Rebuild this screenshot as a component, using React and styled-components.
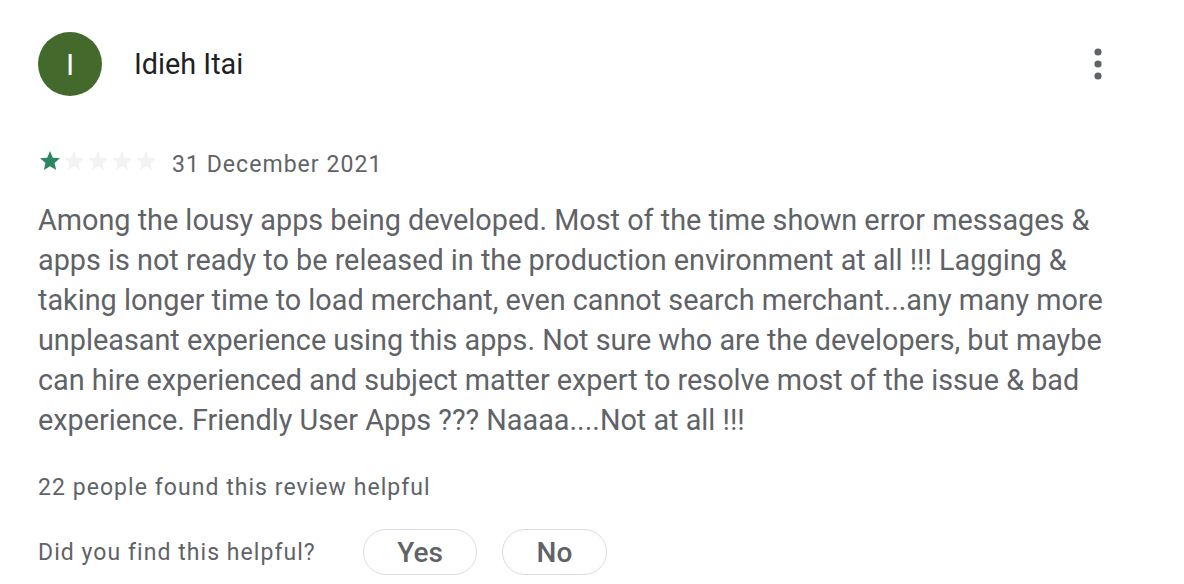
import React from "react";
import styled, { createGlobalStyle } from "styled-components";

const Global = createGlobalStyle`
  html, body { margin: 0; padding: 0; background: #fff; }
  body { font-family: Roboto, "Noto Sans", Arial, sans-serif; -webkit-font-smoothing: antialiased; }
`;

const Card = styled.div`
  padding: 32px 38px 0 38px;
  width: 1184px;
  box-sizing: border-box;
`;

const Header = styled.div`
  display: flex;
  align-items: center;
  height: 64px;
`;

const Avatar = styled.div`
  width: 64px;
  height: 64px;
  border-radius: 50%;
  background: ${(p) => p.$bg};
  color: #fff;
  display: flex;
  align-items: center;
  justify-content: center;
  font-size: 30px;
  font-weight: 400;
  flex-shrink: 0;
`;

const Name = styled.div`
  margin-left: 32px;
  font-size: 28.8px;
  color: #202124;
  flex: 1;
`;

const MenuButton = styled.button`
  width: 48px;
  height: 48px;
  border: none;
  background: none;
  padding: 0;
  margin-right: 24px;
  display: flex;
  align-items: center;
  justify-content: center;
  color: #5f6368;
`;

const Meta = styled.div`
  margin-top: 54px;
  height: 24px;
  display: flex;
  align-items: center;
`;

const Stars = styled.div`
  display: flex;
  gap: 0;
  margin-top: -2px;
`;

const Date = styled.span`
  margin-left: 14px;
  margin-top: 5px;
  font-size: 23px;
  letter-spacing: 1.05px;
  color: #5f6368;
`;

const Body = styled.p`
  margin: 26px 0 0 0;
  font-size: 28.8px;
  line-height: 40px;
  color: #5f6368;
  max-width: 1090px;
`;

const Helpful = styled.div`
  margin-top: 32px;
  font-size: 23px;
  letter-spacing: 1.05px;
  line-height: 32px;
  color: #5f6368;
`;

const Feedback = styled.div`
  margin-top: 25px;
  display: flex;
  align-items: center;
`;

const Question = styled.span`
  font-size: 23px;
  letter-spacing: 1.05px;
  color: #5f6368;
  width: 325px;
`;

const Pill = styled.button`
  height: 46px;
  width: ${(p) => p.$w}px;
  border: 1px solid #dadce0;
  border-radius: 23px;
  background: #fff;
  font-family: inherit;
  font-size: 28px;
  font-weight: 500;
  color: #5f6368;
  margin-right: 25px;
  padding: 0;
`;

const Star = ({ filled }) => (
  <svg width="24" height="24" viewBox="0 0 24 24">
    <path
      d="M12 17.27L18.18 21l-1.64-7.03L22 9.24l-7.19-.61L12 2 9.19 8.63 2 9.24l5.46 4.73L5.82 21z"
      fill={filled ? "#2e8562" : "#f1f3f4"}
    />
  </svg>
);

const MoreVert = () => (
  <svg width="48" height="48" viewBox="0 0 24 24" fill="currentColor">
    <circle cx="12" cy="6" r="1.8" />
    <circle cx="12" cy="12" r="1.8" />
    <circle cx="12" cy="18" r="1.8" />
  </svg>
);

export default function App() {
  return (
    <>
      <Global />
      <Card>
        <Header>
          <Avatar $bg="#436a2c">I</Avatar>
          <Name>Idieh Itai</Name>
          <MenuButton aria-label="More">
            <MoreVert />
          </MenuButton>
        </Header>
        <Meta>
          <Stars>
            {[1, 0, 0, 0, 0].map((f, i) => (
              <Star key={i} filled={!!f} />
            ))}
          </Stars>
          <Date>31 December 2021</Date>
        </Meta>
        <Body>
          Among the lousy apps being developed. Most of the time shown error messages &amp; apps is not
          ready to be released in the production environment at all !!! Lagging &amp; taking longer time
          to load merchant, even cannot search merchant...any many more unpleasant experience using this
          apps. Not sure who are the developers, but maybe can hire experienced and subject matter expert
          to resolve most of the issue &amp; bad experience. Friendly User Apps ??? Naaaa....Not at all !!!
        </Body>
        <Helpful>22 people found this review helpful</Helpful>
        <Feedback>
          <Question>Did you find this helpful?</Question>
          <Pill $w={114}>Yes</Pill>
          <Pill $w={105}>No</Pill>
        </Feedback>
      </Card>
    </>
  );
}
